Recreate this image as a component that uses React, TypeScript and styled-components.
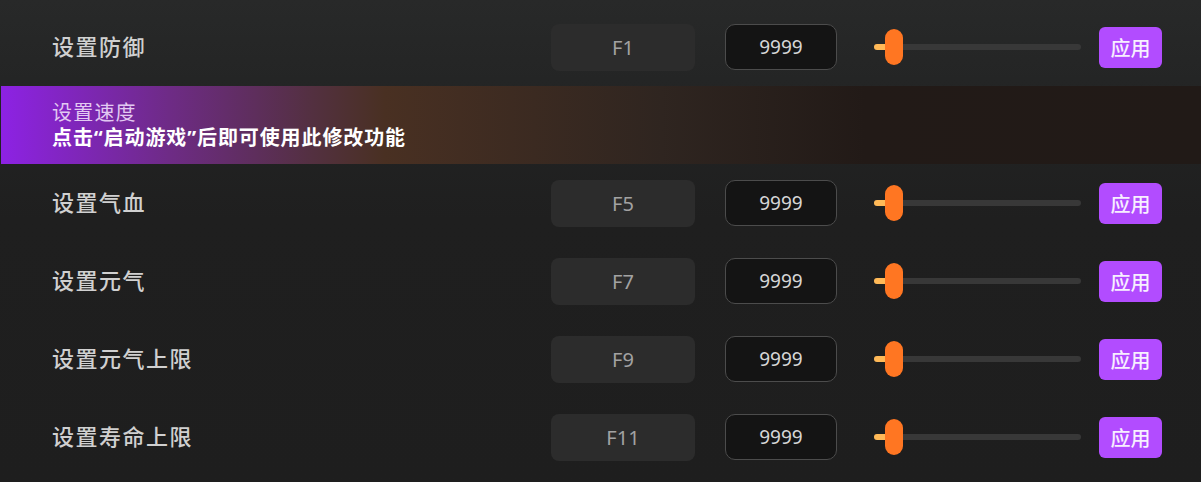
import { createGlobalStyle, styled } from "styled-components";

const GlobalStyle = createGlobalStyle`
    html, body {
        margin: 0;
        padding: 0;
        background: #1e1e1e;
    }
    body {
        font-family: "Noto Sans", "Noto Sans CJK SC", sans-serif;
    }
`;

const Page = styled.div`
    width: 1201px;
    height: 482px;
    overflow: hidden;
    padding-top: 8px;
    box-sizing: border-box;
    background: linear-gradient(180deg, #282929 0px, #222323 120px, #1f1f1f 220px, #1e1e1e 100%);
`;

const List = styled.div`
    display: flex;
    flex-direction: column;
    padding-left: 1px;
`;

const Row = styled.div`
    height: 78px;
    display: flex;
    align-items: center;
    padding: 0 39px 0 51px;
    box-sizing: border-box;
`;

const LockedRow = styled(Row)`
    flex-direction: column;
    align-items: flex-start;
    justify-content: center;
    background: linear-gradient(90deg, #8d22e4 0%, #6e2b86 14%, #533040 26%, #493022 32%, #2f2520 55%, #221a17 72%, #211a17 100%);
`;

const Label = styled.div`
    flex: 1;
    font-size: 22px;
    font-weight: 500;
    letter-spacing: 1.5px;
    color: #d0d0d0;
    padding-bottom: 4px;
`;

const LockedTitle = styled.div`
    font-size: 20px;
    letter-spacing: 1.2px;
    line-height: 25px;
    color: #e2c9f2;
`;

const LockedHint = styled.div`
    font-size: 20px;
    font-weight: 700;
    letter-spacing: 0.9px;
    line-height: 26px;
    color: #ffffff;
`;

const KeyBox = styled.div`
    width: 144px;
    height: 47px;
    border-radius: 8px;
    background: #2c2c2c;
    color: #a2a2a2;
    font-size: 20px;
    display: flex;
    align-items: center;
    justify-content: center;
    margin-right: 30px;
`;

const ValueInput = styled.input`
    width: 112px;
    height: 46px;
    box-sizing: border-box;
    border: 1px solid #4c4c4c;
    border-radius: 10px;
    background: #141414;
    color: #d6d6d6;
    font-family: "Noto Sans", sans-serif;
    font-size: 19px;
    text-align: center;
    outline: none;
    padding: 0;
`;

const Slider = styled.div`
    position: relative;
    width: 207px;
    height: 6px;
    margin-left: 37px;
    border-radius: 3px;
    background: #383838;
`;

const SliderFill = styled.div`
    height: 100%;
    border-radius: 3px;
    background: #ffb957;
`;

const SliderThumb = styled.div`
    position: absolute;
    top: 50%;
    width: 18px;
    height: 36px;
    margin-top: -18px;
    border-radius: 9px;
    background: #ff7622;
`;

const ApplyButton = styled.button`
    width: 63px;
    height: 41px;
    margin-left: 18px;
    border: none;
    border-radius: 6px;
    background: #b24cff;
    color: #f7efff;
    font-family: "Noto Sans CJK SC", sans-serif;
    font-size: 20px;
    font-weight: 500;
    padding: 0;
    cursor: pointer;
`;

type Setting = { label: string; key: string; value: number; locked?: boolean };

const settings: Setting[] = [
    { label: "设置防御", key: "F1", value: 9999 },
    { label: "设置速度", key: "F3", value: 9999, locked: true },
    { label: "设置气血", key: "F5", value: 9999 },
    { label: "设置元气", key: "F7", value: 9999 },
    { label: "设置元气上限", key: "F9", value: 9999 },
    { label: "设置寿命上限", key: "F11", value: 9999 },
];

function SettingSlider({ percent }: { percent: number }) {
    return (
        <Slider>
            <SliderFill style={{ width: `${percent}%` }} />
            <SliderThumb style={{ left: `calc(${percent}% - 3px)` }} />
        </Slider>
    );
}

export default function App() {
    return (
        <>
            <GlobalStyle />
            <Page>
                <List>
                    {settings.map((s) =>
                        s.locked ? (
                            <LockedRow key={s.label}>
                                <LockedTitle>{s.label}</LockedTitle>
                                <LockedHint>点击“启动游戏”后即可使用此修改功能</LockedHint>
                            </LockedRow>
                        ) : (
                            <Row key={s.label}>
                                <Label>{s.label}</Label>
                                <KeyBox>{s.key}</KeyBox>
                                <ValueInput defaultValue={s.value} />
                                <SettingSlider percent={7} />
                                <ApplyButton>应用</ApplyButton>
                            </Row>
                        )
                    )}
                </List>
            </Page>
        </>
    );
}
